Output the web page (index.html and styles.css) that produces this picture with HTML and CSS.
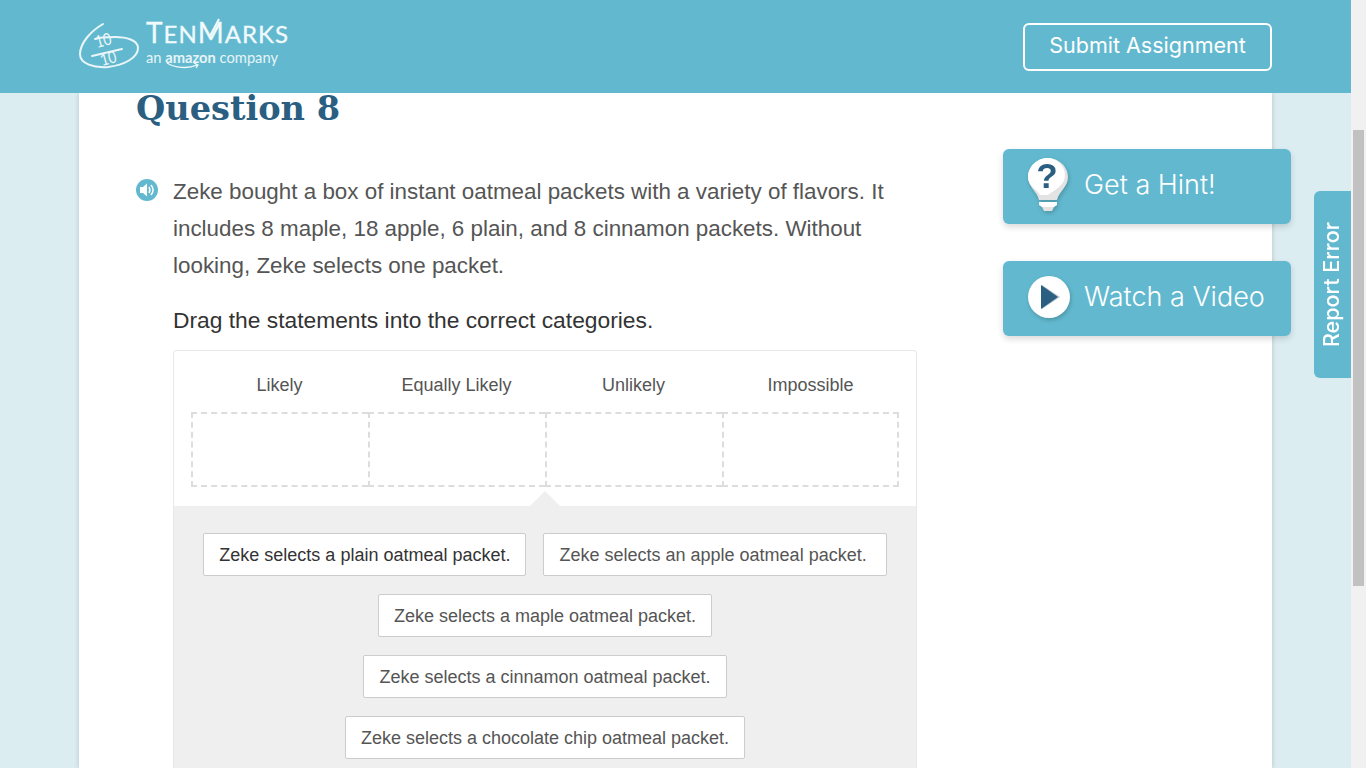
FILE: index.html
```html
<!DOCTYPE html>
<html lang="en">
<head>
<meta charset="UTF-8" />
<meta name="viewport" content="width=device-width, initial-scale=1" />
<title>Question 8</title>
<link rel="stylesheet" href="styles.css">
</head>
<body>

<div class="app">
  <div class="viewport">

    <header class="topbar">
      <div class="topbar-inner">
        <a class="logo">
          <svg class="logo-mark" width="60" height="50" viewBox="0 0 60 50">
            <path class="logo-ring" d="M24 2C12 9 1 21 1 32C1 42 15 46 29 45C45 43 59 36 59 26C59 18 47 15 36 15C28 15 21 15 16 17" />
            <path class="logo-ring" d="M13 34L43 27" />
            <text class="logo-score" transform="translate(18 26) rotate(-15) scale(1 1.2)">10</text>
            <text class="logo-score" transform="translate(23 44) rotate(-15) scale(1 1.2)">10</text>
          </svg>
          <span class="logo-text">
            <span class="logo-name"><span class="logo-cap">T</span>EN<span class="logo-m">M<svg class="logo-tick" width="14" height="24" viewBox="0 0 14 24"><path d="M1 20L10 3" /></svg></span>ARKS</span>
            <span class="logo-sub">an <b>amazon</b> company<svg class="logo-smile" width="34" height="7" viewBox="0 0 34 7"><path d="M1 1C9 6 22 7 31 3M28 1L32 3L30 6" /></svg></span>
          </span>
        </a>
        <button class="btn-submit">Submit Assignment</button>
      </div>
    </header>

    <div class="sheet">
      <main class="question">
        <h1>Question 8</h1>

        <div class="prompt">
          <svg class="speaker" width="22" height="22" viewBox="0 0 22 22">
            <circle cx="11" cy="11" r="11" fill="#62b9cf" />
            <path d="M4 8H7L11 4.5V17.5L7 14H4Z" fill="#fff" />
            <path d="M13 8C14.200 10 14.200 12 13 14M15 6C17.500 9 17.500 13 15 16" fill="none" stroke="#fff" stroke-width="1.5" />
          </svg>
          <p>Zeke bought a box of instant oatmeal packets with a variety of flavors. It includes 8 maple, 18 apple, 6 plain, and 8 cinnamon packets. Without looking, Zeke selects one packet.</p>
        </div>

        <p class="instruction">Drag the statements into the correct categories.</p>

        <section class="sorter">
          <div class="bins">
            <div class="bin-label">Likely</div>
            <div class="bin-label">Equally Likely</div>
            <div class="bin-label">Unlikely</div>
            <div class="bin-label">Impossible</div>
            <div class="bin"></div>
            <div class="bin"></div>
            <div class="bin"></div>
            <div class="bin bin-last"></div>
          </div>
          <div class="tray">
            <div class="tile tile-active">Zeke selects a plain oatmeal packet.</div>
            <div class="tile tile-long">Zeke selects an apple oatmeal packet.</div>
            <div class="tile">Zeke selects a maple oatmeal packet.</div>
            <div class="tile">Zeke selects a cinnamon oatmeal packet.</div>
            <div class="tile">Zeke selects a chocolate chip oatmeal packet.</div>
          </div>
        </section>
      </main>

      <aside class="help">
        <a class="help-btn">
          <svg class="help-icon help-icon-bulb" width="44" height="56" viewBox="0 0 44 56">
            <path d="M22 1C33 1 42 10 42 20C42 30 33 34 31 43H13C11 34 2 30 2 20C2 10 11 1 22 1Z" fill="#e3e3e3" />
            <path d="M21 1C31 1 39 9 39 18C39 28 30 32 22 38H14C11 32 2 29 2 20C2 10 11 1 21 1Z" fill="#fff" />
            <path d="M13 45H31V48L28 50H16L13 48Z" fill="#fff" />
            <path d="M16 50H28L26 54H18Z" fill="#e3e3e3" />
            <text class="help-mark" x="21" y="31">?</text>
          </svg>
          Get a Hint!
        </a>
        <a class="help-btn">
          <svg class="help-icon" width="44" height="44" viewBox="0 0 44 44">
            <circle cx="22" cy="22" r="21" fill="#fff" />
            <path d="M15 10L33 22L15 34Z" fill="#b9c4cb" />
            <path d="M14 10L31 22L14 34Z" fill="#2b5f82" />
          </svg>
          Watch a Video
        </a>
      </aside>
    </div>

    <a class="report-tab"><span>Report Error</span></a>
  </div>

  <div class="scrollbar"><div class="scroll-thumb"></div></div>
</div>

</body>
</html>
```

FILE: styles.css
```css
* {
  box-sizing: border-box;
}
html, body {
  margin: 0;
  height: 100%;
  overflow: hidden;
}
body {
  font-family: 'Liberation Sans', Arial, sans-serif;
  color: #555;
}
.app {
  display: flex;
  height: 100vh;
}
.viewport {
  flex: 1;
  position: relative;
  overflow: hidden;
  background: #dcedf2;
}

/* top bar */
.topbar {
  background: #62b9cf;
  height: 93px;
  position: relative;
  z-index: 2;
}
.topbar-inner {
  width: 1193px;
  height: 100%;
  margin: 0 auto;
  display: flex;
  align-items: center;
  justify-content: space-between;
}
.logo {
  display: flex;
  align-items: center;
  gap: 7px;
  color: #fff;
  font-family: Lato, sans-serif;
}
.logo-ring {
  fill: none;
  stroke: #eaf6f9;
  stroke-width: 2;
  stroke-linecap: round;
}
.logo-score {
  font-family: Lato, sans-serif;
  font-size: 14px;
  fill: #eaf6f9;
}
.logo-text {
  display: flex;
  flex-direction: column;
  padding-bottom: 9px;
}
.logo-name {
  font-size: 24px;
  line-height: 29px;
  letter-spacing: 1px;
  color: #f1fafc;
  -webkit-text-stroke: 0.3px #f1fafc;
}
.logo-cap {
  font-size: 28px;
}
.logo-m {
  position: relative;
  font-size: 28px;
}
.logo-tick {
  position: absolute;
  left: 11px;
  top: 1px;
}
.logo-tick path {
  fill: none;
  stroke: #f1fafc;
  stroke-width: 2;
}
.logo-sub {
  position: relative;
  font-size: 14.7px;
  line-height: 18px;
  color: #e6f4f7;
}
.logo-smile {
  position: absolute;
  left: 20px;
  top: 14px;
}
.logo-smile path {
  fill: none;
  stroke: #f1fafc;
  stroke-width: 1.3;
}
.btn-submit {
  width: 249px;
  height: 48px;
  background: transparent;
  border: 2px solid #fff;
  border-radius: 6px;
  color: #fff;
  font-family: Inter, sans-serif;
  font-size: 21.5px;
  padding: 0 0 3px;
}

/* page */
.sheet {
  width: 1193px;
  height: 675px;
  margin: 0 auto;
  padding-left: 57px;
  background: #fff;
  box-shadow: 0 0 5px rgba(0,0,0,0.18);
  display: flex;
}
.question {
  width: 781px;
}
h1 {
  margin: 0 0 48px;
  height: 32px;
  line-height: 30px;
  font-family: 'DejaVu Serif', serif;
  font-size: 33.6px;
  font-weight: 700;
  color: #2b5f82;
}
.prompt {
  display: flex;
  gap: 15px;
}
.speaker {
  flex: none;
  margin-top: 6px;
}
.prompt p {
  margin: 0;
  width: 730px;
  font-size: 22.4px;
  line-height: 37px;
}
.instruction {
  margin: 18px 0 11px 37px;
  font-size: 22.8px;
  line-height: 37px;
  color: #333;
}
.sorter {
  width: 744px;
  margin-left: 37px;
  border: 1px solid #e8e8e8;
  border-radius: 3px;
}
.bins {
  display: grid;
  grid-template-columns: repeat(4, 1fr);
  padding: 23px 17px 19px;
}
.bin-label {
  font-size: 18px;
  line-height: 22px;
  text-align: center;
  margin-bottom: 16px;
}
.bin {
  height: 75px;
  border: 2px dashed #ddd;
  border-right: none;
}
.bin-last {
  border-right: 2px dashed #ddd;
}
.tray {
  position: relative;
  background: #efefef;
  padding: 27px 20px 30px;
  display: flex;
  flex-wrap: wrap;
  justify-content: center;
  gap: 18px 17px;
}
/* notch pointing up out of the tray */
.tray::before {
  content: "";
  position: absolute;
  left: 50%;
  top: -15px;
  margin-left: -15px;
  border-left: 15px solid transparent;
  border-right: 15px solid transparent;
  border-bottom: 15px solid #efefef;
}
.tile {
  height: 43px;
  line-height: 43px;
  padding: 0 15px;
  background: #fff;
  border: 1px solid #ccc;
  border-radius: 2px;
  font-size: 18px;
  white-space: nowrap;
}
.tile-active {
  color: #333;
}
.tile-long {
  padding-right: 19px;
}

/* hint and video */
.help {
  width: 288px;
  margin: 56px 0 0 86px;
  flex: none;
  display: flex;
  flex-direction: column;
  gap: 37px;
}
.help-btn {
  height: 75px;
  padding: 0 0 4px 24px;
  display: flex;
  align-items: center;
  gap: 13px;
  background: #62b9cf;
  border-radius: 6px;
  box-shadow: 0 3px 6px rgba(0,0,0,0.15);
  color: #fff;
  font-family: Inter, sans-serif;
  font-size: 27px;
  font-weight: 300;
}
.help-icon {
  flex: none;
  filter: drop-shadow(1px 2px 2px rgba(0,0,0,0.2));
}
.help-icon-bulb {
  margin-left: -1px;
  margin-right: 1px;
}
.help-mark {
  font-family: 'Liberation Sans', sans-serif;
  font-size: 35px;
  font-weight: 700;
  fill: #2b5f82;
  text-anchor: middle;
}

.report-tab {
  position: absolute;
  right: 0;
  top: 191px;
  width: 37px;
  height: 187px;
  padding-right: 3px;
  display: flex;
  align-items: center;
  justify-content: center;
  background: #62b9cf;
  border-radius: 6px 0 0 6px;
  color: #fff;
  font-family: Inter, sans-serif;
  font-size: 21.5px;
  font-weight: 500;
}
.report-tab span {
  writing-mode: vertical-rl;
  transform: rotate(180deg);
}

.scrollbar {
  width: 15px;
  flex: none;
  background: #f1f1f1;
  padding: 130px 2px 0;
}
.scroll-thumb {
  height: 456px;
  background: #c1c1c1;
}
```
